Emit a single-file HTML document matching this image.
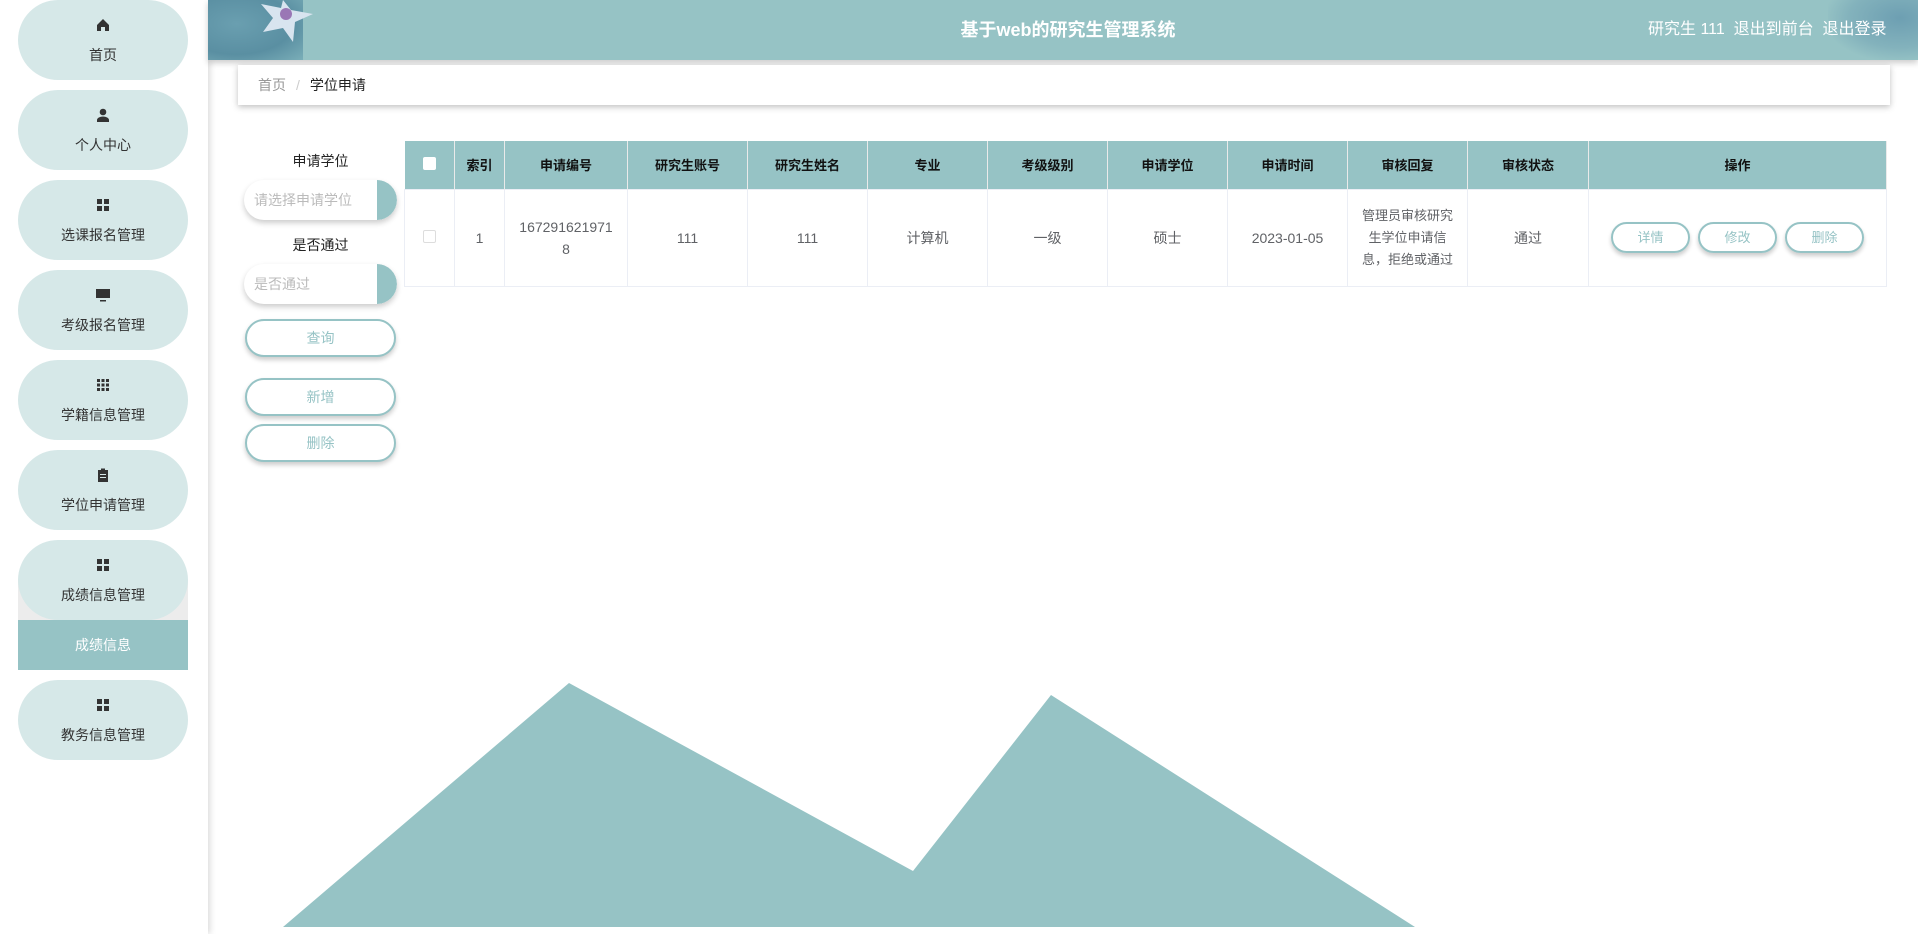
<!DOCTYPE html>
<html><head><meta charset="utf-8">
<style>
*{margin:0;padding:0;box-sizing:border-box}
body{width:1918px;height:934px;overflow:hidden;background:#fff;font-family:"Liberation Sans","Noto Sans CJK SC",sans-serif;position:relative;color:#333}
.abs{position:absolute}
.side{left:0;top:0;width:208px;height:934px;background:#fff;box-shadow:2px 0 6px rgba(0,0,0,.15)}
.pill{position:absolute;left:18px;width:170px;height:80px;border-radius:40px;background:#d6e8e8;text-align:center;font-size:14px;color:#333}
.pill svg{position:absolute;left:78px;top:18px}
.pill span{position:absolute;left:0;right:0;top:45px}
.hdr{left:208px;top:0;width:1710px;height:60px;background:#96c3c5;box-shadow:0 3px 6px rgba(0,0,0,.2)}
.bc{left:238px;top:65px;width:1652px;height:40px;background:#fff;box-shadow:0 2px 6px rgba(0,0,0,.25);font-size:14px;line-height:40px;padding-left:20px}
.lbl{left:244px;width:153px;text-align:center;font-size:14px;color:#222}
.sel{left:244px;width:153px;height:40px;border-radius:20px;background:#fff;box-shadow:0 3px 6px rgba(0,0,0,.2);overflow:hidden;font-size:14px;color:#bbb;line-height:40px;padding-left:10px}
.sel i{position:absolute;right:0;top:0;width:20px;height:40px;background:#96c3c5;border-radius:0 20px 20px 0}
.btn{left:245px;width:151px;height:38px;border:2px solid #96c3c5;border-radius:19px;background:#fff;box-shadow:0 3px 5px rgba(0,0,0,.2);text-align:center;line-height:34px;font-size:14px;color:#96c3c5}
table{position:absolute;left:404px;top:141px;width:1483px;border-collapse:collapse;font-size:14px}
th{background:#96c3c5;height:48px;color:#111;font-weight:bold;font-size:13px;border-right:1px solid #eaeaea}
td{height:97px;text-align:center;color:#606266;border:1px solid #ebeef5;line-height:22px}
.ob{display:inline-block;width:79px;height:31px;border:2px solid #96c3c5;border-radius:16px;line-height:27px;color:#96c3c5;font-size:13px;box-shadow:0 3px 4px rgba(0,0,0,.2);margin:0 4px}
</style></head><body>
<div class="abs side">
 <div class="pill" style="top:0"><svg width="14" height="14" viewBox="0 0 14 14"><path d="M7 1L1 7v6h4V9h4v4h4V7z" fill="#333"/></svg><span>首页</span></div>
 <div class="pill" style="top:90px"><svg width="14" height="14" viewBox="0 0 14 14"><circle cx="7" cy="4" r="3.3" fill="#333"/><path d="M1 14v-2c0-2 3-3.5 6-3.5s6 1.5 6 3.5v2z" fill="#333"/></svg><span>个人中心</span></div>
 <div class="pill" style="top:180px"><svg width="14" height="14" viewBox="0 0 14 14"><path d="M1 1h5v5H1zM8 1h5v5H8zM1 8h5v5H1zM8 8h5v5H8z" fill="#333"/></svg><span>选课报名管理</span></div>
 <div class="pill" style="top:270px"><svg width="14" height="14" viewBox="0 0 14 14"><path d="M0 1h14v9H0zM4 12h6v1.5H4z" fill="#333"/></svg><span>考级报名管理</span></div>
 <div class="pill" style="top:360px"><svg width="14" height="14" viewBox="0 0 14 14"><path d="M1 1h3v3H1zM5.5 1h3v3h-3zM10 1h3v3h-3zM1 5.5h3v3H1zM5.5 5.5h3v3h-3zM10 5.5h3v3h-3zM1 10h3v3H1zM5.5 10h3v3h-3zM10 10h3v3h-3z" fill="#333"/></svg><span>学籍信息管理</span></div>
 <div class="pill" style="top:450px"><svg width="14" height="14" viewBox="0 0 14 14"><path d="M2 2h10v12H2z" fill="#333"/><path d="M5 0.5h4v2.5H5z" fill="#333"/><path d="M4 6h6v1H4zM4 9h6v1H4z" fill="#d6e8e8"/></svg><span>学位申请管理</span></div>
 <div class="abs" style="left:18px;top:580px;width:170px;height:42px;background:#ececec"></div>
 <div class="pill" style="top:540px"><svg width="14" height="14" viewBox="0 0 14 14"><path d="M1 1h5v5H1zM8 1h5v5H8zM1 8h5v5H1zM8 8h5v5H8z" fill="#333"/></svg><span>成绩信息管理</span></div>
 <div class="abs" style="left:18px;top:620px;width:170px;height:50px;background:#96c3c5;color:#fff;font-size:14px;text-align:center;line-height:50px">成绩信息</div>
 <div class="pill" style="top:680px"><svg width="14" height="14" viewBox="0 0 14 14"><path d="M1 1h5v5H1zM8 1h5v5H8zM1 8h5v5H1zM8 8h5v5H8z" fill="#333"/></svg><span>教务信息管理</span></div>
</div>
<div class="abs hdr">
 <div class="abs" style="left:0;top:0;width:95px;height:60px;background:radial-gradient(ellipse at 30% 40%,#6a9fb0,#5a8fa2 60%,#7aaeb8)"></div>
 <svg class="abs" style="left:45px;top:0" width="90" height="50" viewBox="0 0 90 50"><path d="M30 0L38 10 60 14 42 22 40 42 30 28 10 32 20 18 8 4 28 8z" fill="#d8e4ef"/><circle cx="33" cy="14" r="6" fill="#9a77b5"/></svg>
 <div class="abs" style="right:0;top:0;width:90px;height:60px;background:radial-gradient(ellipse at 80% 30%,#6d9fb2,#83b2bc 50%,#96c3c5 75%)"></div>
 <div class="abs" style="left:0;width:1720px;top:0;text-align:center;line-height:60px;color:#fff;font-weight:bold;font-size:18px">基于web的研究生管理系统</div>
 <div class="abs" style="left:1440px;top:0;line-height:60px;color:#fff;font-size:16px;white-space:nowrap">研究生 111&nbsp;&nbsp;退出到前台&nbsp;&nbsp;退出登录</div>
</div>
<div class="abs bc"><span style="color:#999">首页</span><span style="color:#ccc;margin:0 10px">/</span><span style="color:#222">学位申请</span></div>
<div class="abs lbl" style="top:151px">申请学位</div>
<div class="abs sel" style="top:180px">请选择申请学位<i></i></div>
<div class="abs lbl" style="top:235px">是否通过</div>
<div class="abs sel" style="top:264px">是否通过<i></i></div>
<div class="abs btn" style="top:319px">查询</div>
<div class="abs btn" style="top:378px">新增</div>
<div class="abs btn" style="top:424px">删除</div>
<table>
<tr><th style="width:50px"><span style="display:inline-block;width:13px;height:13px;background:#fff;border-radius:2px"></span></th><th style="width:50px">索引</th><th style="width:123px">申请编号</th><th style="width:120px">研究生账号</th><th style="width:120px">研究生姓名</th><th style="width:120px">专业</th><th style="width:120px">考级级别</th><th style="width:120px">申请学位</th><th style="width:120px">申请时间</th><th style="width:120px">审核回复</th><th style="width:121px">审核状态</th><th>操作</th></tr>
<tr><td><span style="display:inline-block;width:13px;height:13px;border:1px solid #ddd;border-radius:2px"></span></td><td>1</td><td>167291621971<br>8</td><td>111</td><td>111</td><td>计算机</td><td>一级</td><td>硕士</td><td>2023-01-05</td><td style="font-size:13px;padding:0 8px">管理员审核研究生学位申请信息，拒绝或通过</td><td>通过</td><td><span class="ob">详情</span><span class="ob">修改</span><span class="ob">删除</span></td></tr>
</table>
<svg class="abs" style="left:0;top:0" width="1918" height="934"><polygon points="283,927 569,683 913,871 1051,695 1415,927" fill="#96c3c5"/></svg>
</body></html>
